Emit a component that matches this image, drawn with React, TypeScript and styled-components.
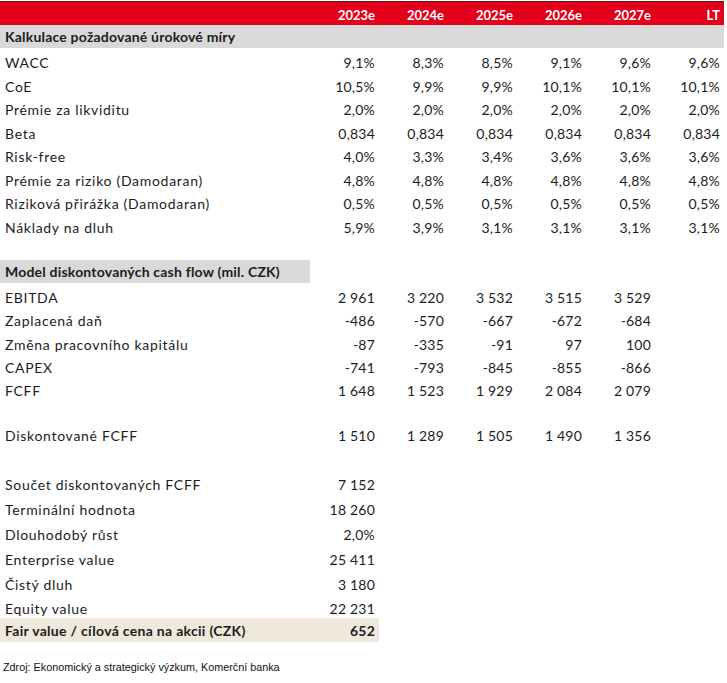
import React from "react";
import styled, { createGlobalStyle } from "styled-components";

const Global = createGlobalStyle`
  *, *::before, *::after { box-sizing: border-box; }
  html, body { margin: 0; padding: 0; background: #ffffff; }
  body { font-family: "Lato", "Open Sans", sans-serif; color: #1c1c1c; }
`;

const Page = styled.div`
  width: 727px;
  padding-top: 1px;
`;

const Table = styled.div`
  width: 724px;
  display: flex;
  flex-direction: column;
`;

const Row = styled.div<{ $h?: number; $bg?: string; $pad?: number }>`
  display: grid;
  grid-template-columns: 310px repeat(6, 69px);
  height: ${(p) => p.$h ?? 23.5}px;
  padding-top: ${(p) => p.$pad ?? 0}px;
  align-items: center;
  background: ${(p) => p.$bg ?? "transparent"};
`;

const HeaderRow = styled(Row)`
  background: #e2001a;
  border-top: 1px solid #4a1a1a;
  height: 24px;
  padding-top: 3px;
`;

const HeadCell = styled.div`
  text-align: right;
  padding-right: 4px;
  color: #ffffff;
  font-weight: 700;
  font-size: 13px;
`;

const Label = styled.div<{ $bg?: string; $bold?: boolean; $ls?: number }>`
  height: 100%;
  display: flex;
  align-items: center;
  padding-left: 5px;
  font-size: 14px;
  letter-spacing: ${(p) => (p.$ls ?? (p.$bold ? 0.2 : 0.7))}px;
  font-weight: ${(p) => (p.$bold ? 700 : 400)};
  background: ${(p) => p.$bg ?? "transparent"};
  white-space: nowrap;
`;

const Value = styled.div<{ $bg?: string; $bold?: boolean }>`
  height: 100%;
  display: flex;
  align-items: center;
  justify-content: flex-end;
  padding-right: 4px;
  font-size: 14px;
  letter-spacing: 0.2px;
  font-weight: ${(p) => (p.$bold ? 700 : 400)};
  background: ${(p) => p.$bg ?? "transparent"};
  white-space: nowrap;
`;

const Source = styled.div`
  margin-top: 18.5px;
  padding-left: 3px;
  font-family: "Liberation Sans", Arial, sans-serif;
  font-size: 10.8px;
  color: #111;
`;

const years = ["2023e", "2024e", "2025e", "2026e", "2027e", "LT"];

const rates: [string, string[]][] = [
  ["WACC", ["9,1%", "8,3%", "8,5%", "9,1%", "9,6%", "9,6%"]],
  ["CoE", ["10,5%", "9,9%", "9,9%", "10,1%", "10,1%", "10,1%"]],
  ["Prémie za likviditu", ["2,0%", "2,0%", "2,0%", "2,0%", "2,0%", "2,0%"]],
  ["Beta", ["0,834", "0,834", "0,834", "0,834", "0,834", "0,834"]],
  ["Risk-free", ["4,0%", "3,3%", "3,4%", "3,6%", "3,6%", "3,6%"]],
  ["Prémie za riziko (Damodaran)", ["4,8%", "4,8%", "4,8%", "4,8%", "4,8%", "4,8%"]],
  ["Riziková přirážka (Damodaran)", ["0,5%", "0,5%", "0,5%", "0,5%", "0,5%", "0,5%"]],
  ["Náklady na dluh", ["5,9%", "3,9%", "3,1%", "3,1%", "3,1%", "3,1%"]],
];

const dcf: [string, string[]][] = [
  ["EBITDA", ["2 961", "3 220", "3 532", "3 515", "3 529"]],
  ["Zaplacená daň", ["-486", "-570", "-667", "-672", "-684"]],
  ["Změna pracovního kapitálu", ["-87", "-335", "-91", "97", "100"]],
  ["CAPEX", ["-741", "-793", "-845", "-855", "-866"]],
  ["FCFF", ["1 648", "1 523", "1 929", "2 084", "2 079"]],
];

const summary: [string, string][] = [
  ["Součet diskontovaných FCFF", "7 152"],
  ["Terminální hodnota", "18 260"],
  ["Dlouhodobý růst", "2,0%"],
  ["Enterprise value", "25 411"],
  ["Čistý dluh", "3 180"],
  ["Equity value", "22 231"],
];

const DataRow = ({
  label,
  values,
  h,
}: {
  label: string;
  values: string[];
  h?: number;
}) => (
  <Row $h={h} $pad={6}>
    <Label>{label}</Label>
    {values.map((v, i) => (
      <Value key={i}>{v}</Value>
    ))}
  </Row>
);

export default function App() {
  return (
    <Page>
      <Global />
      <Table>
        <HeaderRow>
          <div />
          {years.map((y) => (
            <HeadCell key={y}>{y}</HeadCell>
          ))}
        </HeaderRow>
        <Row $bg="#d9d9d9" $h={23}>
          <Label $bold>Kalkulace požadované úrokové míry</Label>
        </Row>
        {rates.map(([l, v]) => (
          <DataRow key={l} label={l} values={v} />
        ))}
        <Row />
        <Row>
          <Label $bold $bg="#d9d9d9">Model diskontovaných cash flow (mil. CZK)</Label>
        </Row>
        {dcf.map(([l, v]) => (
          <DataRow key={l} label={l} values={v} h={23.3} />
        ))}
        <Row $h={21.5} />
        <DataRow label="Diskontované FCFF" values={["1 510", "1 289", "1 505", "1 490", "1 356"]} />
        <Row $h={25} />
        {summary.map(([l, v]) => (
          <DataRow key={l} label={l} values={[v]} h={24.8} />
        ))}
        <Row $h={24}>
          <Label $bold $ls={0.3} $bg="#eee9da">
            Fair value / cílová cena na akcii (CZK)
          </Label>
          <Value $bold $bg="#eee9da">652</Value>
        </Row>
      </Table>
      <Source>Zdroj: Ekonomický a strategický výzkum, Komerční banka</Source>
    </Page>
  );
}
